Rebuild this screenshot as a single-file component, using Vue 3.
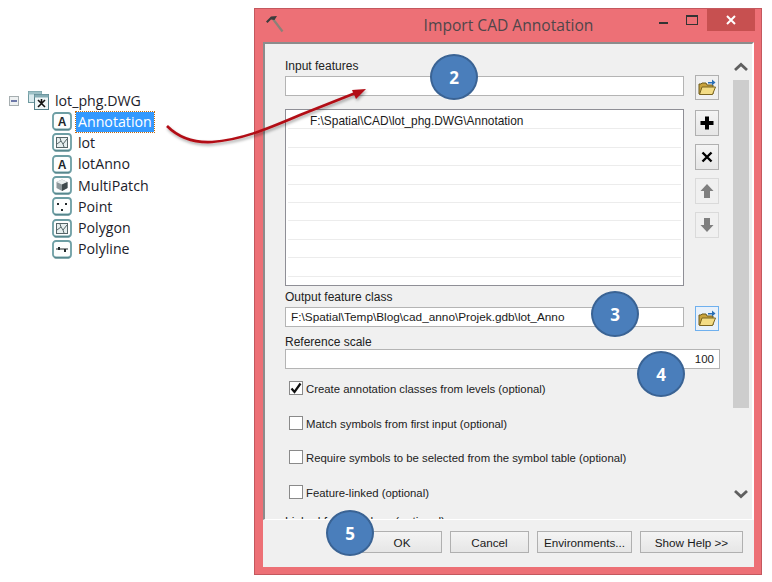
<script setup>
const layers = [
  { name: 'Annotation', icon: 'anno', selected: true },
  { name: 'lot', icon: 'poly' },
  { name: 'lotAnno', icon: 'anno' },
  { name: 'MultiPatch', icon: 'patch' },
  { name: 'Point', icon: 'point' },
  { name: 'Polygon', icon: 'poly' },
  { name: 'Polyline', icon: 'line' }
]
const checks = [
  { label: 'Create annotation classes from levels (optional)', on: true },
  { label: 'Match symbols from first input (optional)', on: false },
  { label: 'Require symbols to be selected from the symbol table (optional)', on: false },
  { label: 'Feature-linked (optional)', on: false }
]
const badges = [
  { n: 2, cls: 'b2' }, { n: 3, cls: 'b3' }, { n: 4, cls: 'b4' }, { n: 5, cls: 'b5' }
]
const listRows = Array.from({ length: 9 })
</script>

<template>
  <div class="page">
    <aside class="tree">
      <div class="root">
        <span class="expander"><i></i></span>
        <svg class="dwg" width="21" height="20" viewBox="0 0 21 20">
          <rect x="0.500" y="0.500" width="13" height="11" fill="#d9eaee" stroke="#6f9aa0"/>
          <rect x="0.500" y="0.500" width="13" height="3" fill="#9cc0c6"/>
          <rect x="6.500" y="3.500" width="14" height="15" fill="#eef6f7" stroke="#55808a"/>
          <rect x="6.500" y="3.500" width="14" height="3" fill="#86adb5"/>
          <path d="M10 9l7 7M17 9l-7 7M13.500 8v5" stroke="#111" stroke-width="1.600" fill="none"/>
        </svg>
        <span class="root-name">lot_phg.DWG</span>
      </div>
      <div v-for="l in layers" :key="l.name" class="layer">
        <svg class="ico" width="20" height="19" viewBox="0 0 20 19">
          <rect x="1" y="1" width="18" height="16.500" rx="3" fill="#fdfefe" stroke="#6d9ea4" stroke-width="1.800"/>
          <path d="M2.500 17.800h15" stroke="#55858b" stroke-width="1.400"/>
          <text v-if="l.icon === 'anno'" x="10" y="14" text-anchor="middle" class="ico-a">A</text>
          <g v-if="l.icon === 'poly'">
            <rect x="4.500" y="4.500" width="11" height="10" fill="#e6eeee" stroke="#566669"/>
            <path d="M5 11l4-3 2 3 4-5M9 8l-1-3M11 11l1 3" stroke="#566669" fill="none"/>
          </g>
          <g v-if="l.icon === 'patch'">
            <path d="M4.500 6l5.500-2.500 5.500 2.500v6l-5.500 3-5.500-3z" fill="#8d979a"/>
            <path d="M4.500 6l5.500 2.500 5.500-2.500-5.500-2.500z" fill="#e8eeee"/>
            <path d="M10 8.500v6.500l5.500-3v-6z" fill="#3f4a4d"/>
          </g>
          <g v-if="l.icon === 'point'" fill="#22292b">
            <rect x="5" y="6" width="2" height="2"/>
            <rect x="13" y="6" width="2" height="2"/>
            <rect x="9" y="12" width="2" height="2"/>
          </g>
          <g v-if="l.icon === 'line'" fill="#22292b">
            <path d="M4 9h12" stroke="#22292b" fill="none"/>
            <rect x="6" y="7" width="2" height="3"/>
            <rect x="12" y="9" width="2" height="3"/>
          </g>
        </svg>
        <span class="layer-name" :class="{ sel: l.selected }">{{ l.name }}</span>
      </div>
    </aside>

    <section class="window">
      <header class="title">
        <svg class="hammer" width="20" height="20" viewBox="0 0 20 20">
          <path d="M9 5L18.500 17.500" stroke="#8a8178" stroke-width="2.200" fill="none"/>
          <path d="M2 7.500L7 2.500L13 2L10.500 6L7 5.500L3.500 9z" fill="#3c3c3c"/>
        </svg>
        <span class="title-text">Import CAD Annotation</span>
        <span class="ctl c-min"><i class="min"></i></span>
        <span class="ctl c-max"><i class="max"></i></span>
        <span class="close">
          <svg width="12" height="12" viewBox="0 0 12 12"><path d="M2 2l8 8M10 2l-8 8" stroke="#fff" stroke-width="2"/></svg>
        </span>
      </header>

      <div class="client">
        <div class="body">
          <div class="form">
            <div class="label">Input features</div>
            <div class="row r-input">
              <div class="input"></div>
              <button class="btn square folder">
                <svg width="18" height="17" viewBox="0 0 18 17">
                  <path d="M1 15V5h2l1-1h4l1 2h6v9z" fill="#c8a23c" stroke="#6d5a1c"/>
                  <path d="M1.500 15.500L4 8h13.500l-3 7.500z" fill="#f3dc85" stroke="#7a6420"/>
                  <path d="M10 3h4V0.500L17.500 3.500 14 6.500V4.500h-4z" fill="#2a6fb5"/>
                </svg>
              </button>
            </div>
            <div class="row r-list">
              <div class="list">
                <div v-for="(_, i) in listRows" :key="i" class="list-row">
                  <span v-if="i === 0">F:\Spatial\CAD\lot_phg.DWG\Annotation</span>
                </div>
              </div>
              <div class="side">
                <button class="btn square tall">
                  <svg width="16" height="16" viewBox="0 0 16 16"><path d="M8 1.500v13M1.500 8h13" stroke="#000" stroke-width="4"/></svg>
                </button>
                <button class="btn square tall">
                  <svg width="12" height="12" viewBox="0 0 12 12"><path d="M1.500 1.500l9 9M10.500 1.500l-9 9" stroke="#000" stroke-width="2.400"/></svg>
                </button>
                <button class="btn square tall off">
                  <svg width="14" height="16" viewBox="0 0 14 16"><path d="M7 1l6.500 7H10v7H4V8H.5z" fill="#7f7f7f"/></svg>
                </button>
                <button class="btn square tall off">
                  <svg width="14" height="16" viewBox="0 0 14 16"><path d="M7 15L.5 8H4V1h6v7h3.500z" fill="#7f7f7f"/></svg>
                </button>
              </div>
            </div>
            <div class="label l-out">Output feature class</div>
            <div class="row r-input">
              <div class="input filled">F:\Spatial\Temp\Blog\cad_anno\Projek.gdb\lot_Anno</div>
              <button class="btn square folder focus">
                <svg width="18" height="17" viewBox="0 0 18 17">
                  <path d="M1 15V5h2l1-1h4l1 2h6v9z" fill="#c8a23c" stroke="#6d5a1c"/>
                  <path d="M1.500 15.500L4 8h13.500l-3 7.500z" fill="#f3dc85" stroke="#7a6420"/>
                  <path d="M10 3h4V0.500L17.500 3.500 14 6.500V4.500h-4z" fill="#2a6fb5"/>
                </svg>
              </button>
            </div>
            <div class="label l-ref">Reference scale</div>
            <div class="input wide">100</div>
            <label v-for="(c, i) in checks" :key="c.label" class="check" :class="{ first: i === 0 }">
              <span class="box">
                <svg v-if="c.on" width="12" height="12" viewBox="0 0 12 12"><path d="M1.500 6.500l3 3.500 6-8.500" stroke="#111" stroke-width="2.200" fill="none"/></svg>
              </span>
              <span class="check-text">{{ c.label }}</span>
            </label>
            <div class="label cut">Linked feature class (optional)</div>
          </div>
          <div class="scroll">
            <svg class="chev" width="16" height="10" viewBox="0 0 16 10"><path d="M2 8l6-5.500L14 8" stroke="#5f5f5f" stroke-width="2.800" fill="none"/></svg>
            <div class="thumb"></div>
            <svg class="chev down" width="16" height="10" viewBox="0 0 16 10"><path d="M2 2l6 5.500L14 2" stroke="#5f5f5f" stroke-width="2.800" fill="none"/></svg>
          </div>
        </div>
        <footer class="foot">
          <button class="btn act ok">OK</button>
          <button class="btn act cancel">Cancel</button>
          <button class="btn act env">Environments...</button>
          <button class="btn act help">Show Help &gt;&gt;</button>
        </footer>
      </div>
    </section>

    <svg class="arrow" width="772" height="582" viewBox="0 0 772 582">
      <defs>
        <filter id="sh" x="-10%" y="-30%" width="120%" height="170%">
          <feDropShadow dx="1" dy="2" stdDeviation="1.500" flood-color="#000" flood-opacity="0.350"/>
        </filter>
      </defs>
      <g filter="url(#sh)">
        <path d="M167 126C178 137 192 143 212 142C240 140 265 130 300 115L358 92" fill="none" stroke="#b20d15" stroke-width="2.600"/>
        <path d="M366 89L352 90L356 99z" fill="#b20d15"/>
      </g>
    </svg>

    <div v-for="b in badges" :key="b.n" class="badge" :class="b.cls">{{ b.n }}</div>
  </div>
</template>

<style>
html, body { margin: 0; background: #fff; }
</style>

<style scoped>
.page {
  position: relative;
  width: 772px;
  height: 582px;
  overflow: hidden;
  display: flex;
  align-items: flex-start;
  background: #fff;
  font-family: "Liberation Sans", Arial, sans-serif;
  color: #1a1a1a;
}

/* tree */
.tree {
  width: 254px;
  flex: none;
  padding-top: 90px;
  box-sizing: border-box;
  font-family: "Open Sans", sans-serif;
  font-size: 14.200px;
}
.root {
  display: flex;
  align-items: center;
  height: 21px;
  padding-left: 9px;
}
.expander {
  width: 10px;
  height: 10px;
  border: 1px solid #a6aeb0;
  background: #eef1f2;
  box-sizing: border-box;
  display: flex;
  align-items: center;
  justify-content: center;
}
.expander i { display: block; width: 6px; height: 2px; background: #6d78a8; }
.dwg { margin-left: 9px; }
.root-name { margin-left: 6px; color: #1c1c2a; }
.layer {
  display: flex;
  align-items: center;
  height: 21.300px;
  padding-left: 52px;
}
.ico { flex: none; }
.ico-a {
  font-family: "Liberation Sans", sans-serif;
  font-size: 12px;
  font-weight: 700;
  fill: #20262a;
}
.layer-name { margin-left: 4px; padding: 0 2px; line-height: 20px; color: #1c1c2a; }
.layer-name.sel {
  background: #3399ff;
  color: #fff;
  outline: 1px dotted #c06a10;
}

/* window */
.window {
  width: 508px;
  height: 567px;
  margin-top: 8px;
  flex: none;
  box-sizing: border-box;
  border: 1px solid #c4585e;
  background: #ed7076;
  padding: 0 7px 7px 8px;
  display: flex;
  flex-direction: column;
}
.title {
  height: 33px;
  flex: none;
  display: flex;
  align-items: flex-start;
  position: relative;
}
.hammer { position: absolute; left: 1px; top: 5px; }
.title-text {
  position: absolute;
  left: 0;
  right: 0;
  top: 5px;
  text-align: center;
  font-family: "Open Sans", sans-serif;
  font-size: 15.600px;
  line-height: 22px;
  color: #50464a;
}
.ctl {
  width: 26px;
  height: 21px;
  display: flex;
  align-items: center;
  justify-content: center;
  position: relative;
}
.c-min { margin-left: auto; margin-right: 3px; }
.c-max { margin-right: 2px; }
.min { display: block; width: 9px; height: 2px; background: #333; margin-top: 7px; }
.max { display: block; width: 10px; height: 7px; border: 1px solid #333; border-top-width: 2px; }
.close {
  width: 48px;
  height: 22px;
  background: #c75050;
  display: flex;
  align-items: center;
  justify-content: center;
  margin-right: -1px;
  position: relative;
}
.client {
  flex: 1;
  min-height: 0;
  display: flex;
  flex-direction: column;
  background: #f0f0f0;
}
.body {
  height: 478px;
  flex: none;
  display: flex;
  overflow: hidden;
  box-sizing: border-box;
  border-top: 2px solid #8c8c8c;
  border-left: 2px solid #8c8c8c;
  border-right: 2px solid #fff;
  border-bottom: 1px solid #fff;
}
.form {
  width: 468px;
  flex: none;
  box-sizing: border-box;
  padding: 14px 0 0 20px;
  font-size: 12px;
}
.label {
  height: 14px;
  line-height: 16px;
  color: #222;
}
.row { display: flex; gap: 11px; }
.r-input { height: 20px; margin-top: 4px; }
.r-list { margin-top: 13px; }
.l-out { margin-top: 3px; }
.l-ref { margin-top: 7px; }
.input {
  width: 399px;
  height: 20px;
  box-sizing: border-box;
  border: 1px solid #b4b4b4;
  background: #fff;
  line-height: 18px;
  padding-left: 5px;
  white-space: nowrap;
  overflow: hidden;
}
.input.filled { font-size: 11.800px; }
.input.wide {
  width: 435px;
  margin-top: 1px;
  text-align: right;
  padding: 0 5px 0 0;
  font-size: 11.500px;
}
.btn {
  box-sizing: border-box;
  border: 1px solid #b0b0b0;
  background: linear-gradient(#f4f4f4, #e6e6e6);
  padding: 0;
  display: flex;
  align-items: center;
  justify-content: center;
  font-family: inherit;
  font-size: 12px;
  color: #1a1a1a;
}
.square { width: 24px; flex: none; }
.folder { height: 25px; margin-top: -1px; background: #f0f0f0; }
.folder.focus { border-color: #6fb0ee; background: #e9f1fa; }
.list {
  width: 399px;
  height: 177px;
  box-sizing: border-box;
  border: 1px solid #8f8f96;
  background: #fff;
  padding: 1px 2px 0;
  overflow: hidden;
}
.list-row {
  height: 18.400px;
  box-sizing: border-box;
  border-bottom: 1px solid #ececec;
  line-height: 21px;
  padding-left: 22px;
  font-size: 11.900px;
}
.side {
  display: flex;
  flex-direction: column;
  gap: 8px;
  margin-top: 1px;
}
.tall { height: 26px; }
.off { background: #f0f0f0; border-color: #dadada; }
.check {
  display: flex;
  align-items: center;
  height: 14px;
  margin-top: 20.500px;
  padding-left: 4px;
  gap: 3px;
  white-space: nowrap;
  color: #222;
  font-size: 11.350px;
}
.check-text { position: relative; line-height: 16px; height: 14px; }
.check.first { margin-top: 12px; }
.box {
  width: 14px;
  height: 14px;
  box-sizing: border-box;
  border: 1px solid #8a8a8a;
  background: #fff;
  display: flex;
  align-items: center;
  justify-content: center;
  flex: none;
}
.cut { margin-top: 15px; white-space: nowrap; }
.scroll {
  flex: 1;
  position: relative;
  display: flex;
  flex-direction: column;
  align-items: center;
  padding-right: 3px;
}
.chev { margin-top: 18px; flex: none; }
.thumb {
  width: 16px;
  height: 328px;
  margin-top: 8px;
  background: #cdcdcd;
  flex: none;
}
.chev.down { margin-top: 81px; }
.foot {
  flex: 1;
  display: flex;
  align-items: flex-start;
  gap: 8px;
  padding: 11px 0 0 99px;
}
.act { height: 22px; padding-top: 1px; font-size: 11.700px; }
.ok { width: 80px; }
.cancel { width: 79px; }
.env { width: 95px; }
.help { width: 103px; }

/* callouts */
.arrow { position: absolute; left: 0; top: 0; pointer-events: none; }
.badge {
  position: absolute;
  width: 48px;
  height: 46px;
  box-sizing: border-box;
  border-radius: 50%;
  border: 2px solid #3a6394;
  background: #4a7ebb;
  color: #fff;
  font-family: "Open Sans", sans-serif;
  font-size: 17px;
  font-weight: 700;
  display: flex;
  align-items: center;
  justify-content: center;
}
.b2 { left: 430px; top: 54px; }
.b3 { left: 591px; top: 291px; }
.b4 { left: 637px; top: 351px; }
.b5 { left: 326px; top: 510px; }
</style>
